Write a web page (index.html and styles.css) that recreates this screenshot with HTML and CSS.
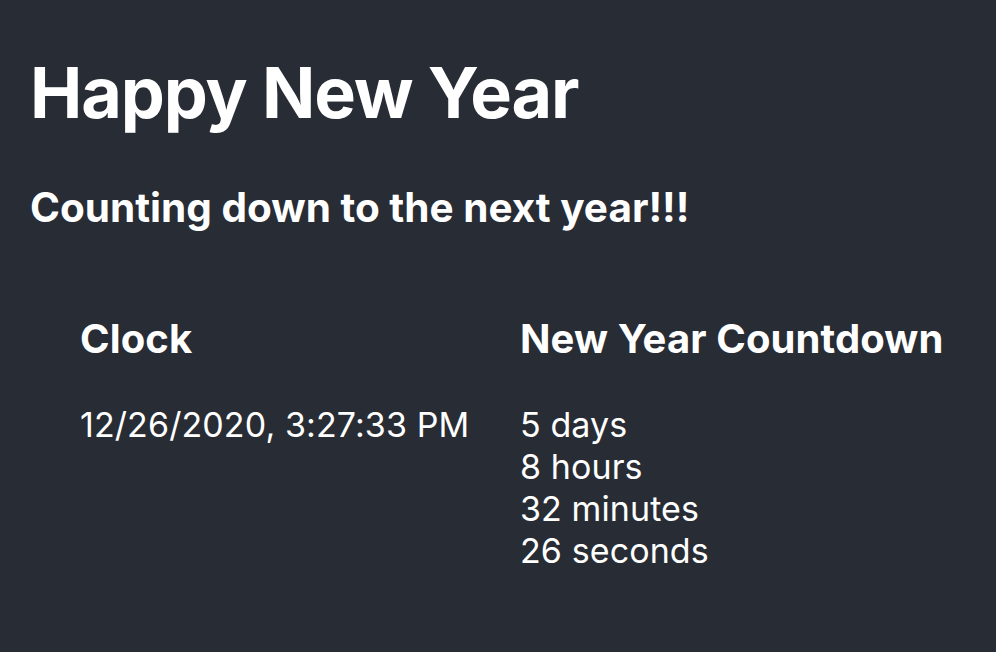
FILE: index.html
```html
<!DOCTYPE html>
<html lang="en">
<head>
<meta charset="utf-8">
<title>Happy New Year</title>
<link rel="stylesheet" href="styles.css">
</head>
<body>
<main class="app">
  <h1 class="title">Happy New Year</h1>
  <h2 class="subtitle">Counting down to the next year!!!</h2>
  <section class="panels">
    <div class="panel panel-clock">
      <h3 class="panel-title">Clock</h3>
      <p class="line">12/26/2020, 3:27:33 PM</p>
    </div>
    <div class="panel panel-countdown">
      <h3 class="panel-title">New Year Countdown</h3>
      <p class="line">5 days</p>
      <p class="line">8 hours</p>
      <p class="line">32 minutes</p>
      <p class="line">26 seconds</p>
    </div>
  </section>
</main>
</body>
</html>
```

FILE: styles.css
```css
html, body {
  margin: 0;
  padding: 0;
  background: #282c34;
  color: #ffffff;
  font-family: Inter, "Noto Sans", sans-serif;
}
.app {
  padding: 50px 32px 0 30px;
}
.title {
  margin: 0;
  font-size: 70px;
  line-height: 86px;
  font-weight: 700;
  letter-spacing: -1.1px;
}
.subtitle {
  margin: 47px 0 0 0;
  font-size: 40.5px;
  line-height: 50px;
  font-weight: 700;
  letter-spacing: 0;
}
.panels {
  display: grid;
  grid-template-columns: 440px 1fr;
  padding-left: 50px;
  margin-top: 83px;
}
.panel-title {
  margin: 0 0 42px 0;
  font-size: 40px;
  line-height: 46px;
  font-weight: 700;
  letter-spacing: 0.1px;
}
.line {
  margin: 0;
  font-size: 34px;
  line-height: 42px;
  font-weight: 400;
  letter-spacing: 0.1px;
}
```
